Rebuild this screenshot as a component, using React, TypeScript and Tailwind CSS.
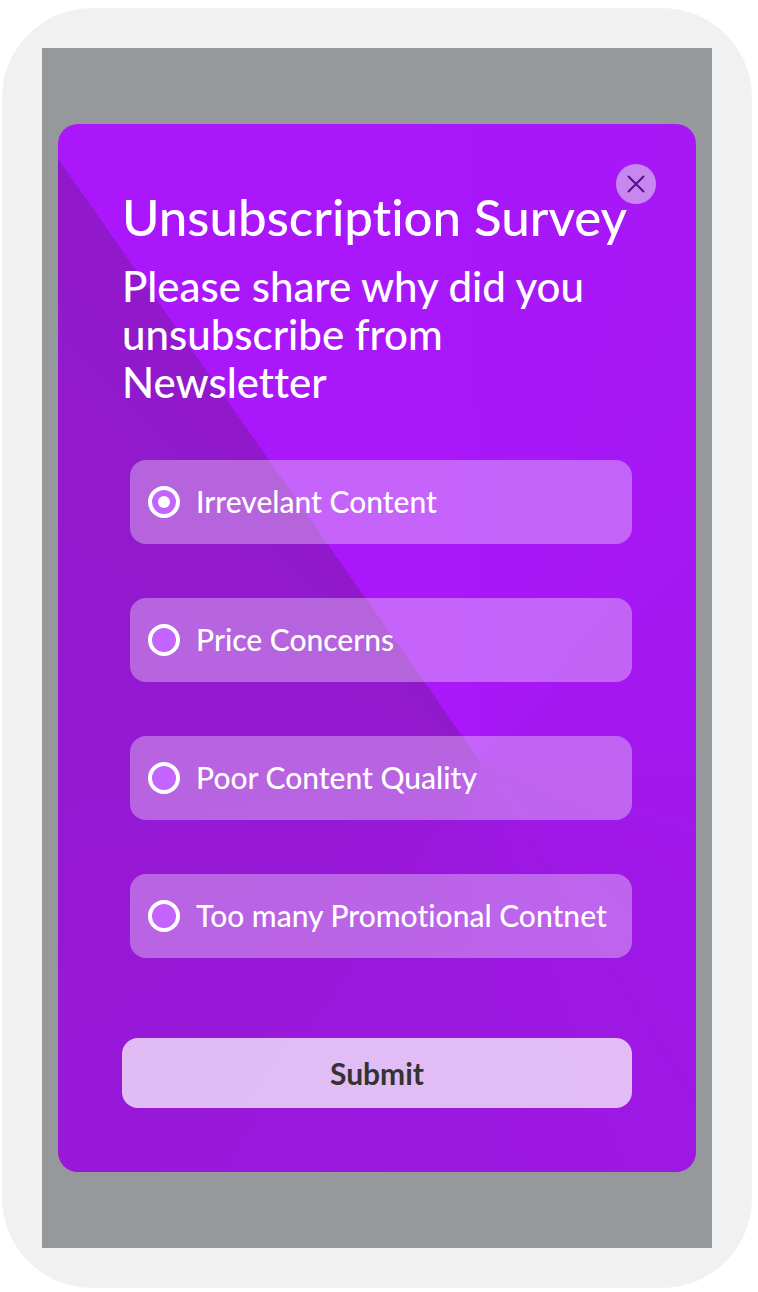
import React, { useState } from 'react';

interface SurveyOption {
  id: string;
  label: string;
}

const options: SurveyOption[] = [
  { id: 'irrelevant', label: 'Irrevelant Content' },
  { id: 'price', label: 'Price Concerns' },
  { id: 'quality', label: 'Poor Content Quality' },
  { id: 'promotional', label: 'Too many Promotional Contnet' },
];

interface OptionRowProps {
  option: SurveyOption;
  checked: boolean;
  onSelect: (id: string) => void;
}

const OptionRow: React.FC<OptionRowProps> = ({ option, checked, onSelect }) => (
  <label
    htmlFor={option.id}
    className="flex min-h-[84px] items-center gap-4 rounded-2xl bg-white/33 px-[18px] text-[30px] leading-9 text-white"
  >
    <input
      type="radio"
      id={option.id}
      name="reason"
      value={option.id}
      checked={checked}
      onChange={() => onSelect(option.id)}
      className="grid size-8 shrink-0 appearance-none place-content-center rounded-full border-4 border-white bg-[#c464ff] before:size-3 before:rounded-full checked:before:bg-white"
    />
    <span className="pb-0.5">{option.label}</span>
  </label>
);

const SurveyCard: React.FC = () => {
  const [selected, setSelected] = useState('irrelevant');

  return (
    <form
      onSubmit={(e) => e.preventDefault()}
      className="relative w-full rounded-[20px] bg-[conic-gradient(from_325deg_at_66%_60.7%,#a917fa_8%,#9119cb)] p-16"
    >
      <button
        type="button"
        aria-label="Close"
        className="absolute top-10 right-10 flex size-10 items-center justify-center rounded-full bg-[#c886ef] text-[#54108a]"
      >
        <svg viewBox="0 0 18 18" className="size-[18px]" fill="none" stroke="currentColor" strokeWidth="2" strokeLinecap="round">
          <path d="M1.5 1.5l15 15M16.5 1.5l-15 15" />
        </svg>
      </button>

      <h1 className="text-[51px] leading-[58px] whitespace-nowrap text-white">Unsubscription Survey</h1>
      <p className="mt-4 text-[42px] leading-[48px] text-white">
        Please share why did you unsubscribe from Newsletter
      </p>

      <div role="radiogroup" aria-label="Reason" className="mt-[54px] ml-2 flex flex-col gap-[54px]">
        {options.map((option) => (
          <OptionRow
            key={option.id}
            option={option}
            checked={selected === option.id}
            onSelect={setSelected}
          />
        ))}
      </div>

      <button
        type="submit"
        className="mt-20 h-[70px] w-full rounded-2xl bg-white/71 text-[30px] leading-9 font-bold text-[#333333]"
      >
        Submit
      </button>
    </form>
  );
};

const App: React.FC = () => {
  return (
    <div className="min-h-screen bg-white pt-2 pr-1.5 pb-1 pl-0.5 font-['Lato',sans-serif] font-medium [font-variant-ligatures:none]">
      {/* phone frame */}
      <div className="rounded-[90px] bg-[#f1f1f1] p-10">
        <div className="flex min-h-[1200px] items-center bg-[#95999b] px-4">
          <SurveyCard />
        </div>
      </div>
    </div>
  );
};

export default App;
